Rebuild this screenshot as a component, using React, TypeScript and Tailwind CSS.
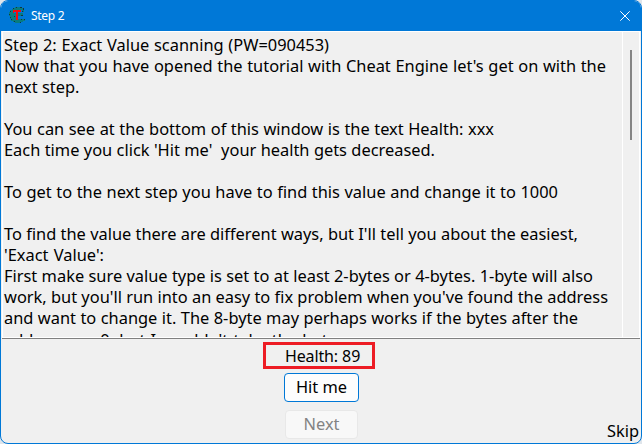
import React from "react";

type Line = { text: string; width: string };

const lines: Line[] = [
  { text: "Step 2: Exact Value scanning (PW=090453)", width: "w-[325px]" },
  { text: "Now that you have opened the tutorial with Cheat Engine let's get on with the", width: "w-[602px]" },
  { text: "next step.", width: "w-[75px]" },
  { text: "", width: "w-0" },
  { text: "You can see at the bottom of this window is the text Health: xxx", width: "w-[490px]" },
  { text: "Each time you click 'Hit me'\u00a0 your health gets decreased.", width: "w-[431px]" },
  { text: "", width: "w-0" },
  { text: "To get to the next step you have to find this value and change it to 1000", width: "w-[554px]" },
  { text: "", width: "w-0" },
  { text: "To find the value there are different ways, but I'll tell you about the easiest,", width: "w-[574px]" },
  { text: "'Exact Value':", width: "w-[100px]" },
  { text: "First make sure value type is set to at least 2-bytes or 4-bytes. 1-byte will also", width: "w-[589px]" },
  { text: "work, but you'll run into an easy to fix problem when you've found the address", width: "w-[604px]" },
  { text: "and want to change it. The 8-byte may perhaps works if the bytes after the", width: "w-[574px]" },
  { text: "address are 0, but I wouldn't take the bet.", width: "w-[328px] mt-px" },
];

function TutorialIcon() {
  return (
    <svg width="16" height="16" viewBox="0 0 16 16" shapeRendering="crispEdges">
      <path d="M6 0h7v1h2v4h-2V3H7v1H5v2h9v3H9v3h7v2h-2v1h-2v1H6v-1H4v-1H2v-2H1V9H0V5h1V3h2V2h1V1h2z" fill="#087c80" />
      <path d="M7 0h1v1H7zM11 0h2v1h-2zM14 1h1v2h-1zM4 1h1v1H4zM1 4h1v1H1zM0 7h1v1H0zM1 10h1v1H1zM2 12h1v1H2zM5 14h1v1H5zM11 15h1v1h-1zM15 12h1v1h-1zM12 8h2v1h-2zM5 9h1v1H5zM12 12h1v1h-1zM13 4h1v1h-1z" fill="#12383d" />
      <path d="M4 3h8v2H9v8H7V5H5v1H4z" fill="#f20a10" />
    </svg>
  );
}

export default function App() {
  return (
    <div className="h-[444px] w-[642px] overflow-hidden bg-[#dfe5eb] font-['Noto_Sans','Open_Sans',sans-serif] text-[16.4px] text-black">
      <div className="flex h-full flex-col overflow-hidden rounded-[8px] border border-[#0078d7] bg-[#f0f0f0]">
        <header className="flex h-[30px] shrink-0 items-center bg-[#0078d7] pl-2 pr-[11px] text-white">
          <div className="pb-[2px]">
            <TutorialIcon />
          </div>
          <span className="ml-[6px] text-[12px] leading-4 tracking-[-0.3px]">Step 2</span>
          <svg className="ml-auto" width="10" height="10" viewBox="0 0 10 10">
            <path d="M.3.3l9.4 9.4M9.7.3L.3 9.7" stroke="white" strokeWidth="1" />
          </svg>
        </header>
        <main className="mx-px flex h-[308px] shrink-0 border-b border-[#808080]">
          <div className="flex grow overflow-hidden border border-white">
            <div className="w-[619px] shrink-0 overflow-hidden pl-px pt-[2px]">
              {lines.map((line, i) => (
                <p key={i} className={`${line.width} h-[21px] whitespace-nowrap leading-[21px] [text-align-last:justify]`}>
                  {line.text}
                </p>
              ))}
            </div>
            <div className="grow border-l border-white pl-[7px] pt-[18px]">
              <div className="h-[90px] w-[2px] bg-[#858585]" />
            </div>
          </div>
        </main>
        <footer className="flex grow flex-col items-center">
          <div className="mr-[4px] mt-[3px] flex h-[27px] w-[112px] items-center border-[3px] border-[#ed1c24] pl-[19px] text-[16px]">
            <span className="w-[57px] tracking-[-0.15px]">Health:</span>
            <span>89</span>
          </div>
          <button className="mt-[4px] h-[29px] w-[75px] rounded-[4px] border border-[#0078d7] bg-[#fdfdfd] pl-px">Hit me</button>
          <div className="flex w-full items-start">
            <button className="ml-[284px] mt-[8px] h-[29px] w-[73px] rounded-[4px] border border-[#e8e8e8] bg-[#f8f8f8] text-[#838383]">Next</button>
            <span className="ml-auto mt-[17px] pr-[2px] leading-[24px]">Skip</span>
          </div>
        </footer>
      </div>
    </div>
  );
}
